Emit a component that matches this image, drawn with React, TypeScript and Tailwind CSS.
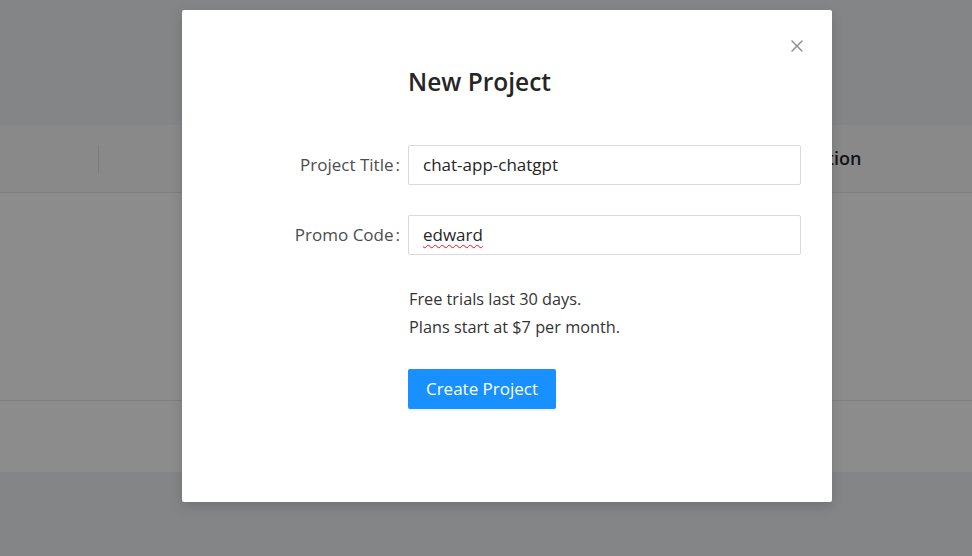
import { X } from "lucide-react";

const font = { fontFamily: '"Open Sans", "Noto Sans", sans-serif' };

function Field({ label, value, wavy }: { label: string; value: string; wavy?: boolean }) {
  return (
    <div className="flex items-center">
      <label className="w-[218px] text-right text-[17px] text-[#4d4d4d]">
        {label}
        <span className="ml-[2px]">:</span>
      </label>
      <div className="ml-[8px] flex h-[40px] w-[393px] items-center rounded-[2px] border border-[#d9d9d9] px-[14px] text-[17px] text-[#262626]">
        {wavy ? (
          <span className="underline decoration-[#e81123] decoration-wavy decoration-1 underline-offset-[3px]">
            {value}
          </span>
        ) : (
          value
        )}
      </div>
    </div>
  );
}

export default function App() {
  return (
    <div className="relative h-[556px] w-[972px] overflow-hidden bg-[#f0f2f5]" style={font}>
      {/* page behind the mask */}
      <div className="pt-[125px]">
        <div className="bg-white">
          <div className="flex h-[68px] items-center border-b border-[#e8e8e8] bg-[#fafafa]">
            <div className="h-[28px] w-[99px] border-r border-[#e0e0e0]" />
            <div className="flex-1" />
            <div className="w-[192px] pl-[26px] text-[18px] font-semibold text-[#262626]">Action</div>
          </div>
          <div className="h-[208px] border-b border-[#e8e8e8]" />
          <div className="h-[71px]" />
        </div>
      </div>

      {/* mask */}
      <div className="absolute inset-0 bg-black/45" />

      {/* modal */}
      <div className="absolute left-[182px] top-[10px] h-[492px] w-[650px] rounded-[2px] bg-white shadow-[0_4px_12px_rgba(0,0,0,0.15)]">
        <button className="absolute right-[25px] top-[26px] text-[#8c8c8c]" aria-label="Close">
          <X size={20} strokeWidth={1.6} />
        </button>

        <div className="pt-[55px]">
          <h2 className="pl-[226px] text-[24.5px] font-semibold leading-[34px] text-[#262626]">New Project</h2>

          <div className="mt-[46px] flex flex-col gap-[30px]">
            <Field label="Project Title" value="chat-app-chatgpt" />
            <Field label="Promo Code" value="edward" wavy />
          </div>

          <div className="mt-[30px] pl-[227px] text-[16.3px] leading-[28px] text-[#333]">
            <p>Free trials last 30 days.</p>
            <p>Plans start at $7 per month.</p>
          </div>

          <div className="mt-[28px] pl-[226px]">
            <button className="h-[40px] w-[148px] rounded-[2px] bg-[#1890ff] text-[17px] text-white shadow-[0_2px_0_rgba(0,0,0,0.045)]">
              Create Project
            </button>
          </div>
        </div>
      </div>
    </div>
  );
}
